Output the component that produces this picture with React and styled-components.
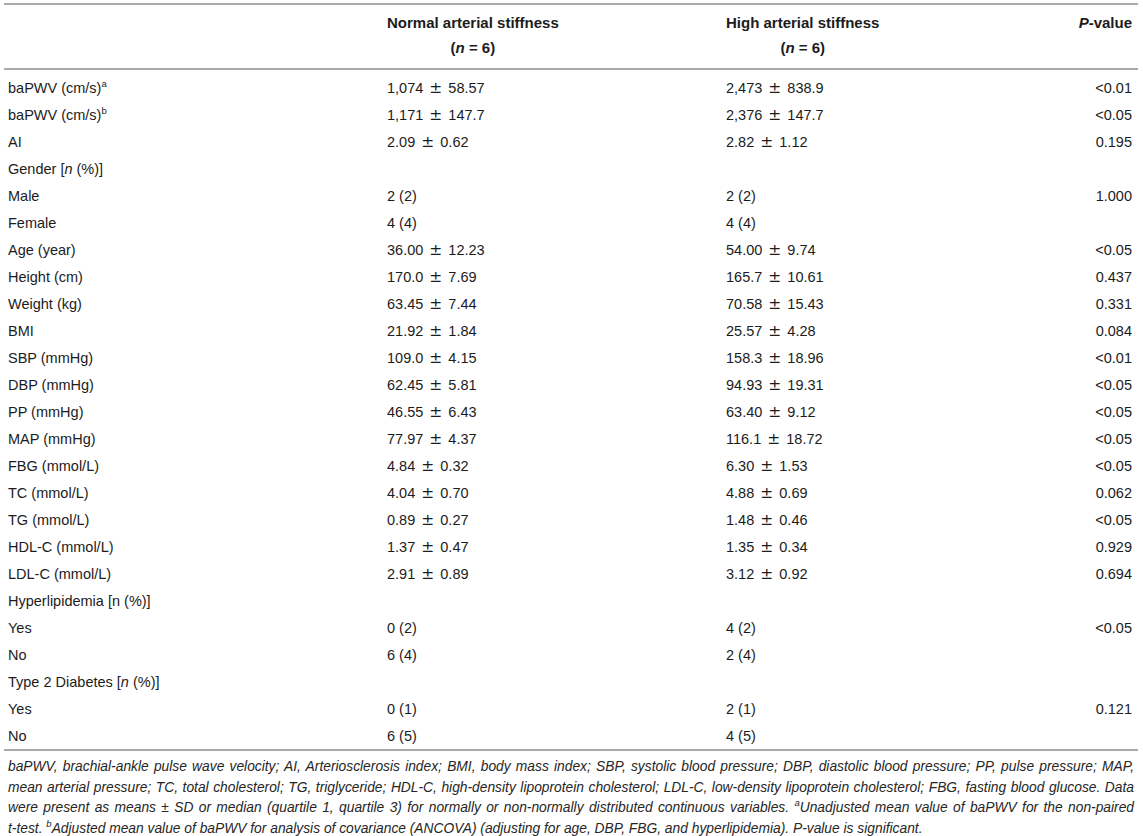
import React from 'react'
import styled, { createGlobalStyle } from 'styled-components'

const GlobalStyle = createGlobalStyle`
  body {
    margin: 0;
    background: #fff;
  }
`

const Page = styled.div`
  padding: 3px 5px 0 4px;
  font-family: "Liberation Sans", Arial, Helvetica, sans-serif;
  color: #1c1c1c;
`

const Table = styled.div`
  border-top: 2px solid #aaa;
  border-bottom: 2px solid #aaa;
`

const Row = styled.div`
  display: grid;
  grid-template-columns: 379px 339px 1fr 140px;
  align-items: center;
  padding: 0 6px 0 4px;
  height: ${({ head }) => (head ? '65px' : '27px')};
  font-size: 14.5px;
  ${({ head }) =>
    head &&
    `
    align-items: start;
    padding-top: 5px;
    box-sizing: border-box;
    border-bottom: 2px solid #aaa;
    margin-bottom: 4px;
  `}
`

const HeadBlock = styled.div`
  display: inline-flex;
  flex-direction: column;
  align-items: center;
  font-size: 15px;
  font-weight: bold;
  line-height: 25px;
`

const HeadCell = styled.div`
  font-size: 15px;
  font-weight: bold;
  line-height: 25px;
  text-align: right;
`

const Cell = styled.div`
  white-space: nowrap;
  text-align: ${({ right }) => (right ? 'right' : 'left')};
`

const Pm = styled.span`
  font-family: "DejaVu Sans", sans-serif;
  font-size: 15.5px;
  margin: 0 2px;
`

const Sup = styled.sup`
  font-size: 9.5px;
  line-height: 0;
  vertical-align: 6px;
`

const Foot = styled.div`
  padding: 6px 4px 0 4px;
  font-size: 13.8px;
  font-style: italic;
  line-height: 20.5px;
  color: #262626;
`

const FootLine = styled.div`
  white-space: nowrap;
  ${({ full }) =>
    full &&
    `
    text-align: justify;
    text-align-last: justify;
  `}
`

// "a ± b" values with a wide plus-minus sign like the math typeset in the source
const pm = (a, b) => (
  <>
    {a} <Pm>±</Pm> {b}
  </>
)

const rows = [
  [<>baPWV (cm/s)<Sup>a</Sup></>, pm('1,074', '58.57'), pm('2,473', '838.9'), '<0.01'],
  [<>baPWV (cm/s)<Sup>b</Sup></>, pm('1,171', '147.7'), pm('2,376', '147.7'), '<0.05'],
  ['AI', pm('2.09', '0.62'), pm('2.82', '1.12'), '0.195'],
  [<>Gender [<i>n</i> (%)]</>, '', '', ''],
  ['Male', '2 (2)', '2 (2)', '1.000'],
  ['Female', '4 (4)', '4 (4)', ''],
  ['Age (year)', pm('36.00', '12.23'), pm('54.00', '9.74'), '<0.05'],
  ['Height (cm)', pm('170.0', '7.69'), pm('165.7', '10.61'), '0.437'],
  ['Weight (kg)', pm('63.45', '7.44'), pm('70.58', '15.43'), '0.331'],
  ['BMI', pm('21.92', '1.84'), pm('25.57', '4.28'), '0.084'],
  ['SBP (mmHg)', pm('109.0', '4.15'), pm('158.3', '18.96'), '<0.01'],
  ['DBP (mmHg)', pm('62.45', '5.81'), pm('94.93', '19.31'), '<0.05'],
  ['PP (mmHg)', pm('46.55', '6.43'), pm('63.40', '9.12'), '<0.05'],
  ['MAP (mmHg)', pm('77.97', '4.37'), pm('116.1', '18.72'), '<0.05'],
  ['FBG (mmol/L)', pm('4.84', '0.32'), pm('6.30', '1.53'), '<0.05'],
  ['TC (mmol/L)', pm('4.04', '0.70'), pm('4.88', '0.69'), '0.062'],
  ['TG (mmol/L)', pm('0.89', '0.27'), pm('1.48', '0.46'), '<0.05'],
  ['HDL-C (mmol/L)', pm('1.37', '0.47'), pm('1.35', '0.34'), '0.929'],
  ['LDL-C (mmol/L)', pm('2.91', '0.89'), pm('3.12', '0.92'), '0.694'],
  ['Hyperlipidemia [n (%)]', '', '', ''],
  ['Yes', '0 (2)', '4 (2)', '<0.05'],
  ['No', '6 (4)', '2 (4)', ''],
  [<>Type 2 Diabetes [<i>n</i> (%)]</>, '', '', ''],
  ['Yes', '0 (1)', '2 (1)', '0.121'],
  ['No', '6 (5)', '4 (5)', ''],
]

export default function App() {
  return (
    <Page>
      <GlobalStyle />
      <Table>
        <Row head>
          <div />
          <div>
            <HeadBlock>
              <span>Normal arterial stiffness</span>
              <span>(<i>n</i> = 6)</span>
            </HeadBlock>
          </div>
          <div>
            <HeadBlock>
              <span>High arterial stiffness</span>
              <span>(<i>n</i> = 6)</span>
            </HeadBlock>
          </div>
          <HeadCell><i>P</i>-value</HeadCell>
        </Row>
        {rows.map((r, i) => (
          <Row key={i}>
            <Cell>{r[0]}</Cell>
            <Cell>{r[1]}</Cell>
            <Cell>{r[2]}</Cell>
            <Cell right>{r[3]}</Cell>
          </Row>
        ))}
      </Table>
      <Foot>
        <FootLine full>baPWV, brachial-ankle pulse wave velocity; AI, Arteriosclerosis index; BMI, body mass index; SBP, systolic blood pressure; DBP, diastolic blood pressure; PP, pulse pressure; MAP,</FootLine>
        <FootLine full>mean arterial pressure; TC, total cholesterol; TG, triglyceride; HDL-C, high-density lipoprotein cholesterol; LDL-C, low-density lipoprotein cholesterol; FBG, fasting blood glucose. Data</FootLine>
        <FootLine full>were present as means ± SD or median (quartile 1, quartile 3) for normally or non-normally distributed continuous variables. <Sup>a</Sup>Unadjusted mean value of baPWV for the non-paired</FootLine>
        <FootLine>t-test. <Sup>b</Sup>Adjusted mean value of baPWV for analysis of covariance (ANCOVA) (adjusting for age, DBP, FBG, and hyperlipidemia). P-value is significant.</FootLine>
      </Foot>
    </Page>
  )
}
